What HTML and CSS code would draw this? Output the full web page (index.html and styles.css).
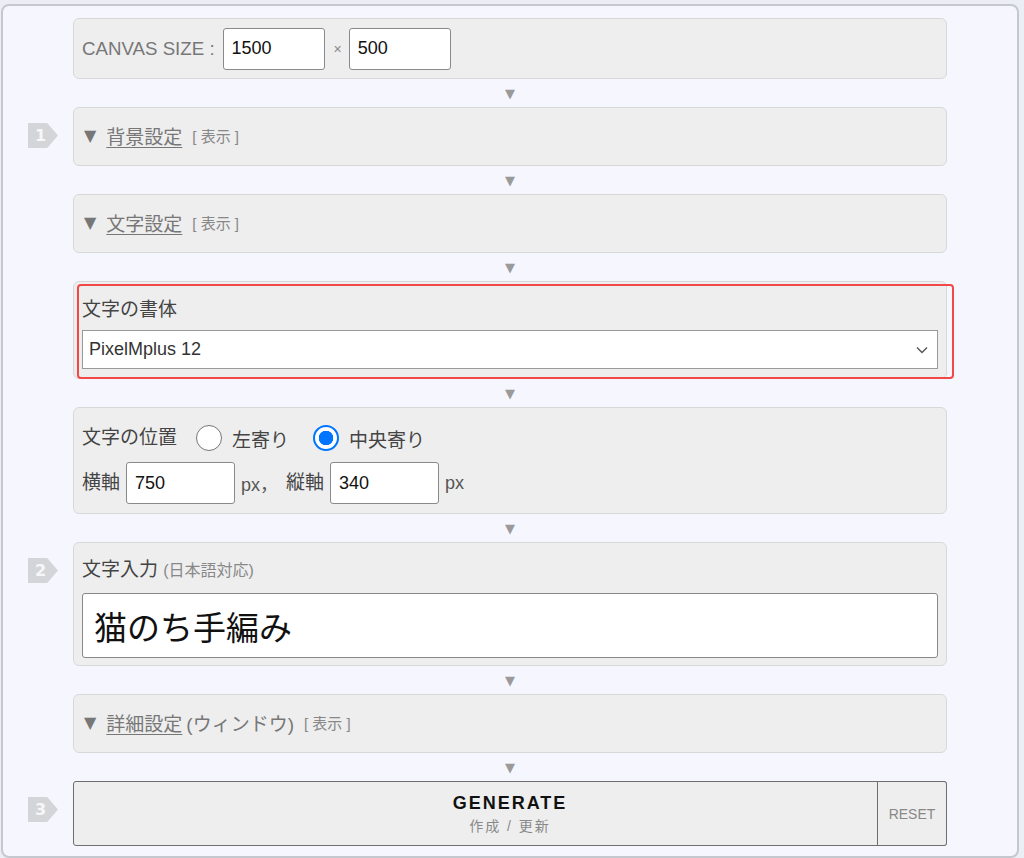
FILE: index.html
```html
<!DOCTYPE html>
<html lang="ja">
<head>
<meta charset="utf-8">
<title>Canvas</title>
<link rel="stylesheet" href="styles.css">
</head>
<body>
<div class="app">
  <div class="row">
    <div class="gutter"></div>
    <div class="panel p-canvas">
      <span class="canvas-label">CANVAS SIZE :</span>
      <input class="field w102" type="text" value="1500">
      <span class="times">×</span>
      <input class="field w102" type="text" value="500">
    </div>
  </div>
  <div class="divider"><span class="arrow">▼</span></div>

  <div class="row">
    <div class="gutter"><span class="badge">1</span></div>
    <div class="panel p-fold">
      <span class="tri">▼</span><span class="fold-title">背景設定</span><span class="show">[ 表示 ]</span>
    </div>
  </div>
  <div class="divider"><span class="arrow">▼</span></div>

  <div class="row">
    <div class="gutter"></div>
    <div class="panel p-fold">
      <span class="tri">▼</span><span class="fold-title">文字設定</span><span class="show">[ 表示 ]</span>
    </div>
  </div>
  <div class="divider"><span class="arrow">▼</span></div>

  <div class="row">
    <div class="gutter"></div>
    <div class="panel p-font">
      <div class="label">文字の書体</div>
      <div class="select">
        <span>PixelMplus 12</span>
        <svg class="chev" width="12" height="8" viewBox="0 0 12 8"><path d="M1 1.5 L6 6.5 L11 1.5" fill="none" stroke="#555" stroke-width="1.4"/></svg>
      </div>
    </div>
  </div>
  <div class="divider"><span class="arrow">▼</span></div>

  <div class="row">
    <div class="gutter"></div>
    <div class="panel p-pos">
      <div class="pos-line">
        <span class="label">文字の位置</span>
        <span class="radio"></span><span class="opt">左寄り</span>
        <span class="radio checked"></span><span class="opt">中央寄り</span>
      </div>
      <div class="pos-line2">
        <span class="label">横軸</span>
        <input class="field w109" type="text" value="750">
        <span class="unit">px，</span>
        <span class="label">縦軸</span>
        <input class="field w109" type="text" value="340">
        <span class="unit">px</span>
      </div>
    </div>
  </div>
  <div class="divider"><span class="arrow">▼</span></div>

  <div class="row">
    <div class="gutter"><span class="badge">2</span></div>
    <div class="panel p-text">
      <div class="label">文字入力 <span class="note">(日本語対応)</span></div>
      <input class="big-field" type="text" value="猫のち手編み">
    </div>
  </div>
  <div class="divider"><span class="arrow">▼</span></div>

  <div class="row">
    <div class="gutter"></div>
    <div class="panel p-fold">
      <span class="tri">▼</span><span class="fold-title">詳細設定</span><span class="fold-sub">(ウィンドウ)</span><span class="show">[ 表示 ]</span>
    </div>
  </div>
  <div class="divider"><span class="arrow">▼</span></div>

  <div class="row">
    <div class="gutter"><span class="badge">3</span></div>
    <div class="gen-wrap">
      <button class="gen" type="button">
        <span class="gen-main">GENERATE</span>
        <span class="gen-sub">作成 / 更新</span>
      </button>
      <button class="reset" type="button">RESET</button>
    </div>
  </div>
</div>
</body>
</html>
```

FILE: styles.css
```css
* { box-sizing: border-box; }

html, body {
  margin: 0;
  padding: 0;
}

body {
  background: #eceef5;
  font-family: "Liberation Sans", "Noto Sans CJK JP", sans-serif;
  color: #444;
}

.app {
  width: 1018px;
  margin: 4px 0 0 1px;
  border: 2px solid #c6c8d0;
  border-radius: 8px;
  background: #f6f7fe;
  padding: 12px 0 8px 0;
  height: 854px;
}

.row {
  display: flex;
}

.gutter {
  width: 70px;
  flex: none;
}

.badge {
  display: flex;
  align-items: center;
  width: 30px;
  height: 25px;
  margin: 16px 0 0 25px;
  padding-left: 7px;
  background: #d4d5d9;
  clip-path: polygon(0 0, 64% 0, 100% 50%, 64% 100%, 0 100%);
  color: #f7f7f9;
  font-family: "DejaVu Sans", sans-serif;
  font-weight: bold;
  font-size: 16px;
  line-height: 1;
}

.panel {
  width: 874px;
  flex: none;
  background: #eeeeee;
  border: 1px solid #d8d8d8;
  border-radius: 6px;
  padding: 0 8px;
}

.divider {
  margin-left: 70px;
  width: 874px;
  height: 28px;
  display: flex;
  align-items: center;
  justify-content: center;
}

.arrow {
  font-family: "DejaVu Sans", sans-serif;
  font-size: 13px;
  color: #9a9a9a;
  line-height: 1;
}

/* canvas size */
.p-canvas {
  height: 61px;
  display: flex;
  align-items: center;
}

.canvas-label {
  font-size: 18.7px;
  color: #777;
  margin-right: 8px;
}

.field {
  height: 42px;
  border: 1px solid #8a8a8a;
  border-radius: 3px;
  background: #fff;
  font-family: "Liberation Sans", "Noto Sans CJK JP", sans-serif;
  font-size: 18px;
  color: #111;
  padding: 0 8px;
  margin: 0;
  outline: none;
}

.w102 { width: 102px; }
.w109 { width: 109px; }

.times {
  font-size: 14px;
  color: #888;
  margin: 0 7px 0 9px;
}

/* fold panels */
.p-fold {
  height: 59px;
  display: flex;
  align-items: center;
  color: #777;
  font-size: 19px;
  padding-bottom: 2px;
}

.tri {
  font-family: "DejaVu Sans", sans-serif;
  font-size: 16px;
  color: #777;
  margin: 0 10px 0 2px;
}

.fold-title {
  text-decoration: underline;
  text-underline-offset: 3px;
  color: #777;
}

.fold-sub {
  margin-left: 4px;
  color: #777;
}

.show {
  font-size: 15px;
  color: #888;
  margin-left: 10px;
}

/* font panel */
.p-font {
  position: relative;
  height: 98px;
  padding-top: 16px;
}

.p-font::after {
  content: "";
  position: absolute;
  left: 3px;
  top: 2px;
  right: -8px;
  bottom: -1px;
  border: 2px solid #f34848;
  border-radius: 4px;
  pointer-events: none;
}

.label {
  font-size: 19px;
  color: #444;
  line-height: 24px;
}

.select {
  margin-top: 8px;
  height: 39px;
  background: #fff;
  border: 1px solid #999;
  display: flex;
  align-items: center;
  justify-content: space-between;
  padding: 0 8px 0 6px;
  font-size: 18px;
  color: #333;
}

.chev {
  margin-right: 1px;
}

/* position panel */
.p-pos {
  height: 107px;
  padding-top: 16px;
}

.pos-line {
  display: flex;
  align-items: center;
  height: 28px;
}

.radio {
  width: 26px;
  height: 26px;
  border-radius: 50%;
  border: 1.5px solid #767676;
  background: #fff;
  margin: 0 10px 0 19px;
  flex: none;
}

.radio.checked {
  border: 2px solid #0075ff;
  background: radial-gradient(circle, #0075ff 0 7px, #fff 7.5px);
  margin-left: 24px;
}

.opt {
  font-size: 19px;
  color: #444;
}

.pos-line2 {
  display: flex;
  align-items: center;
  margin-top: 10px;
  gap: 6px;
}

.unit {
  font-size: 18px;
  color: #555;
  margin-right: 2px;
}

/* text panel */
.p-text {
  height: 124px;
  padding-top: 15px;
}

.note {
  font-size: 16px;
  color: #888;
}

.big-field {
  display: block;
  margin-top: 10px;
  width: 100%;
  height: 65px;
  border: 1px solid #888;
  border-radius: 3px;
  background: #fff;
  font-family: "Noto Sans CJK JP", sans-serif;
  font-size: 33px;
  color: #111;
  padding: 0 11px;
  outline: none;
}

/* generate */
.gen-wrap {
  position: relative;
  width: 874px;
  height: 65px;
  flex: none;
}

.gen {
  width: 100%;
  height: 100%;
  margin: 0;
  background: #eeeeee;
  border: 1px solid #6e6e6e;
  border-radius: 3px;
  display: flex;
  flex-direction: column;
  align-items: center;
  justify-content: center;
  font-family: "Liberation Sans", "Noto Sans CJK JP", sans-serif;
  cursor: pointer;
}

.gen-main {
  font-size: 18px;
  font-weight: bold;
  letter-spacing: 2px;
  color: #111;
  line-height: 22px;
}

.gen-sub {
  font-size: 14px;
  letter-spacing: 2px;
  color: #888;
  line-height: 18px;
  margin-top: 3px;
}

.reset {
  position: absolute;
  right: 0;
  top: 0;
  bottom: 0;
  width: 70px;
  margin: 0;
  background: #eeeeee;
  border: 1px solid #6e6e6e;
  border-radius: 0 3px 3px 0;
  font-family: "Liberation Sans", sans-serif;
  font-size: 14px;
  color: #888;
  cursor: pointer;
}
```
